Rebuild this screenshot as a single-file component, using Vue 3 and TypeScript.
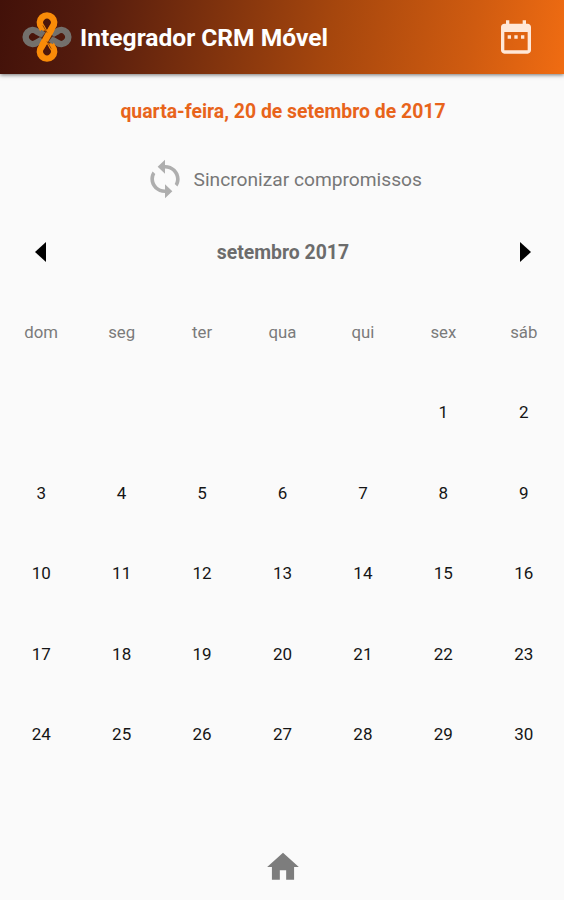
<script setup lang="ts">
const weekdays: string[] = ['dom', 'seg', 'ter', 'qua', 'qui', 'sex', 'sáb']
const leadingBlanks = 5
const days: number[] = Array.from({ length: 30 }, (_, i) => i + 1)
</script>

<template>
  <div class="screen">
    <header class="bar">
      <svg class="logo" viewBox="0 0 50 52" aria-hidden="true">
        <g fill="none" stroke-width="6.6" stroke-linejoin="round">
          <path class="grey" d="M25 26 L15.3 31.3 A7 7 0 1 1 15.3 20.7 L34.7 31.3 A7 7 0 1 0 34.7 20.7 Z" />
          <path class="orange" d="M25 26 L19.6 16.2 A7.1 7.1 0 1 1 30.4 16.2 L19.6 35.8 A7.1 7.1 0 1 0 30.4 35.8 Z" />
          <path class="casing" d="M19.8 22.5 L25 26 L30.2 29.5" />
          <path class="grey" d="M17.5 21.5 L32.5 30.5" />
          <path class="casing" d="M27.6 22.4 L22.4 29.6" />
          <path class="orange" d="M29.5 18 L20.5 34" />
          <path class="seam" d="M20.8 14.4 L25 21.6 M29.2 37.6 L25 30.4" />
        </g>
      </svg>
      <h1 class="title">Integrador CRM Móvel</h1>
      <svg class="calendar-icon" viewBox="0 0 24 24" aria-hidden="true">
        <path d="M9 11H7v2h2v-2zm4 0h-2v2h2v-2zm4 0h-2v2h2v-2zm2-7h-1V2h-2v2H8V2H6v2H5c-1.11 0-1.99.9-1.99 2L3 20c0 1.1.89 2 2 2h14c1.1 0 2-.9 2-2V6c0-1.1-.9-2-2-2zm0 16H5V9h14v11z" />
      </svg>
    </header>

    <p class="today">quarta-feira, 20 de setembro de 2017</p>

    <div class="sync">
      <svg class="sync-icon" viewBox="0 0 24 24" preserveAspectRatio="none" aria-hidden="true">
        <path d="M12 4V1L8 5l4 4V6c3.31 0 6 2.69 6 6 0 1.01-.25 1.97-.7 2.8l1.46 1.46C19.54 15.03 20 13.57 20 12c0-4.42-3.58-8-8-8zm0 14c-3.31 0-6-2.69-6-6 0-1.01.25-1.97.7-2.8L5.24 7.74C4.46 8.97 4 10.43 4 12c0 4.42 3.58 8 8 8v3l4-4-4-4v3z" />
      </svg>
      <span class="sync-label">Sincronizar compromissos</span>
    </div>

    <div class="grid month">
      <svg class="arrow" viewBox="0 0 11 20" aria-hidden="true"><path d="M11 0V20L0 10z" /></svg>
      <span class="month-name">setembro 2017</span>
      <svg class="arrow next" viewBox="0 0 11 20" aria-hidden="true"><path d="M0 0V20L11 10z" /></svg>
    </div>

    <div class="grid calendar">
      <span v-for="day in weekdays" :key="day" class="cell weekday">{{ day }}</span>
      <span v-for="n in leadingBlanks" :key="'blank' + n" class="cell"></span>
      <span v-for="day in days" :key="day" class="cell">{{ day }}</span>
    </div>

    <nav class="footer">
      <svg class="home" viewBox="0 0 24 24" aria-hidden="true">
        <path d="M10 20v-6h4v6h5v-8h3L12 3 2 12h3v8z" />
      </svg>
    </nav>
  </div>
</template>

<style>
body {
  margin: 0;
  background: #fafafa;
}
</style>

<style scoped>
.screen {
  box-sizing: border-box;
  width: 564px;
  height: 900px;
  display: flex;
  flex-direction: column;
  overflow: hidden;
  background: #fafafa;
  font-family: Roboto, "Liberation Sans", sans-serif;
}
.bar {
  box-sizing: border-box;
  height: 74px;
  flex: none;
  display: flex;
  align-items: center;
  padding: 0 28.5px 0 22px;
  background: linear-gradient(100deg, #421109 0%, #531b0d 15%, #a5460d 58%, #cf5b10 83%, #f06c12 100%);
  box-shadow: 0 1px 4px rgba(0, 0, 0, 0.55);
}
.logo {
  width: 50px;
  height: 52px;
}
.orange {
  stroke: #f98b08;
}
.grey {
  stroke: #73706c;
}
.casing {
  stroke: #54200e;
  stroke-width: 8;
}
.seam {
  stroke: #7a3a0c;
  stroke-width: 0.8;
}
.title {
  margin: 0 auto 0 8px;
  padding-top: 2px;
  font-size: 24.6px;
  line-height: 30px;
  font-weight: 700;
  color: #fff;
  white-space: nowrap;
}
.calendar-icon {
  width: 40px;
  height: 40px;
  fill: #ffe8d8;
}
.today {
  margin: 26px 0 0 2px;
  text-align: center;
  font-size: 19.4px;
  line-height: 24px;
  font-weight: 700;
  color: #e8641b;
}
.sync {
  display: flex;
  align-items: center;
  height: 44px;
  margin-top: 32.5px;
  padding-left: 143px;
  gap: 6.5px;
}
.sync-icon {
  width: 44px;
  height: 42px;
  fill: #aeaeae;
}
.sync-label {
  padding-top: 2px;
  font-size: 19.2px;
  line-height: 24px;
  color: #777;
  white-space: nowrap;
}
.grid {
  display: grid;
  grid-template-columns: repeat(7, 1fr);
  grid-auto-rows: 80.35px;
  align-items: center;
  justify-items: center;
  margin-left: 1px;
}
.month {
  margin-top: 11.5px;
}
.calendar {
  margin-top: -0.4px;
}
.month-name {
  grid-column: 2 / 7;
  padding: 2px 0 0 1px;
  font-size: 19.4px;
  line-height: 24px;
  font-weight: 700;
  color: #6c6c6c;
}
.arrow {
  width: 11px;
  height: 20px;
  margin-right: 2px;
  fill: #000;
}
.arrow.next {
  margin: 0 0 0 3px;
}
.cell {
  font-size: 17px;
  line-height: 20px;
  color: #151515;
}
.weekday {
  font-size: 16.8px;
  color: #7b7b7b;
}
.footer {
  display: flex;
  justify-content: center;
  margin-top: 73.5px;
  padding-left: 1px;
}
.home {
  width: 38px;
  height: 38px;
  fill: #7d7d7d;
}
</style>
